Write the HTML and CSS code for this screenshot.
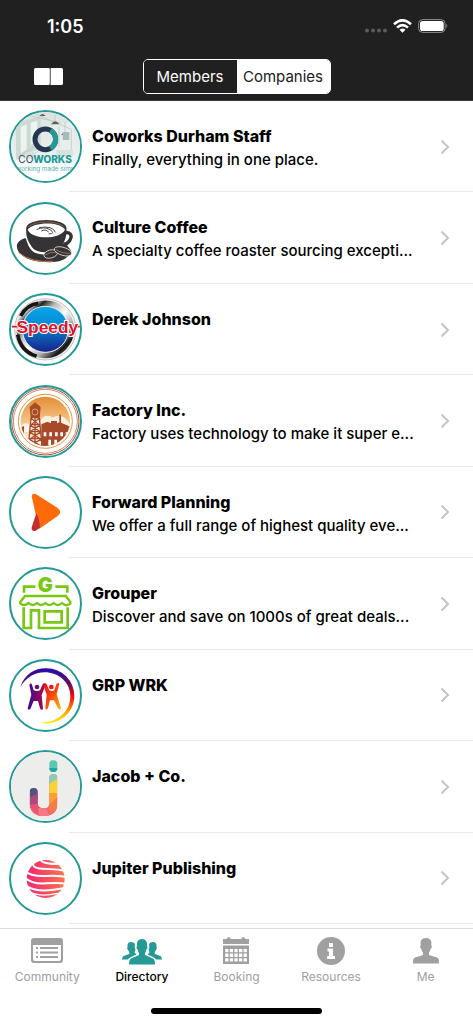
FILE: index.html
```html
<!DOCTYPE html>
<html lang="en">
<head>
  <meta charset="UTF-8" />
  <meta name="viewport" content="width=device-width, initial-scale=1.0"/>
  <title>Directory</title>
  <link rel="stylesheet" href="styles.css">
</head>
<body>
  <div class="app">
    <header class="header">
      <div class="status-bar">
        <span class="clock">1:05</span>
        <div class="status-icons">
          <svg width="22" height="14" viewBox="0 0 22 14" fill="#5c5c5c"><circle cx="2" cy="11.5" r="2"/><circle cx="8" cy="11.5" r="2"/><circle cx="14" cy="11.5" r="2"/><circle cx="20" cy="11.5" r="2"/></svg>
          <svg width="19" height="14" viewBox="0 0 19 14" fill="none" stroke="#fff" stroke-width="2.6"><path d="M1 5.200Q9.500-2.500 18 5.200M4 8.600Q9.500 3.700 15 8.600"/><path d="M6.500 10.800Q9.500 8.400 12.500 10.800L9.500 13.800z" fill="#fff" stroke="none"/></svg>
          <svg width="30" height="14" viewBox="0 0 30 14"><rect x=".6" y=".6" width="26.500" height="12.800" rx="4" fill="none" stroke="#8d8d8d"/><rect x="2" y="2" width="23.700" height="10" rx="2.600" fill="#fff"/><path d="M28.300 4.800q2 2.200 0 4.400z" fill="#8d8d8d"/></svg>
        </div>
      </div>
      <div class="nav-bar">
        <button class="book-button" aria-label="Guide"><svg width="29" height="17" viewBox="0 0 29 17"><path d="M1.500 0H14.500q1.300 0 1.300 1.300v14.400q0 1.300-1.300 1.300H1.500Q0 17 0 15.500v-14Q0 0 1.500 0zM16.600 0h10.900Q29 0 29 1.500v14q0 1.500-1.500 1.500H16.600z" fill="#fff"/></svg></button>
        <div class="segmented">
          <button class="segment">Members</button>
          <button class="segment selected">Companies</button>
        </div>
      </div>
    </header>

    <main class="main">
      <ul class="company-list">
        <li class="company">
          <a class="company-link" href="#">
            <svg class="avatar" viewBox="6 6 207 207">
              <defs><linearGradient id="office" x2="0" y2="1"><stop stop-color="#dbe3df"/><stop offset=".6" stop-color="#e9efed"/><stop offset=".85" stop-color="#fff"/></linearGradient></defs>
              <rect width="219" height="219" fill="url(#office)"/>
              <path d="M20 40L95 18v95L22 150z" fill="#cdd9d3"/>
              <path d="M35 50l18-7v75l-18 12zM65 38l20-6v62l-20 12z" fill="#edf3ee"/>
              <path d="M132 38h62v92h-62z" fill="#e8eeed"/>
              <path d="M60 16l98 24M80 12l105 45M138 15v18M168 35v34M150 48v62M187 58v65M28 140l45-28M46 154l40-30" stroke="#b6c3bf" stroke-width="2" fill="none"/>
              <path d="M126 43q13-18 25 0zM156 75q12-15 22 0zM92 18q8-12 18 0z" fill="#56645f"/>
              <path d="M161 66h20v24h-20z" fill="#a9bab9"/>
              <path d="M50 126h25v20H50zM142 120h50v18h-50z" fill="#d7e1dd"/>
              <circle cx="109" cy="88" r="31" fill="none" stroke="#253750" stroke-width="15"/>
              <path d="M124 61A31 31 0 0 1 124 115" fill="none" stroke="#249a97" stroke-width="15"/>
              <text x="28" y="158" class="logo-coworks" fill="#34475b">CO<tspan class="heavy" fill="#249a97">WORKS</tspan></text>
              <text x="109" y="183" class="logo-tagline" text-anchor="middle" fill="#58b0ac">working made simp</text>
            </svg>
            <span class="details"><strong class="name">Coworks Durham Staff</strong><span class="about">Finally, everything in one place.</span></span>
            <svg class="chevron" viewBox="0 0 10 16"><path d="M1.500 1.500L8 8l-6.500 6.500"/></svg>
          </a>
        </li>
        <li class="company">
          <a class="company-link" href="#">
            <svg class="avatar" viewBox="6 6 207 207">
              <path d="M52 108C19 115 15 139 38 159C66 184 143 187 168 170Q188 158 184 143L167 121z" fill="#363334"/>
              <path d="M28 151Q65 183 132 178" fill="none" stroke="#cc7950" stroke-width="3"/>
              <path d="M53 105C63 143 74 154 108 154Q150 154 164 122" fill="none" stroke="#fff" stroke-width="7"/>
              <path d="M166 93C198 86 192 125 151 133" fill="none" stroke="#363334" stroke-width="10"/>
              <path d="M52 77C48 110 65 149 112 149S176 111 172 77z" fill="#363334"/>
              <ellipse cx="112" cy="78" rx="60" ry="24" fill="#363334"/>
              <path d="M56 83C72 60 151 57 168 83C155 112 70 115 56 83z" fill="#fff"/>
              <path d="M58 74C83 55 140 55 166 74" fill="none" stroke="#bd7656" stroke-width="2"/>
              <path d="M83 83Q105 72 123 83T119 96M97 87Q112 80 119 91M90 77Q132 70 139 91" fill="none" stroke="#4b4645" stroke-width="3"/>
              <g stroke="#fff" stroke-width="2" fill="#363334"><ellipse cx="125" cy="156" rx="21" ry="12" transform="rotate(-15 125 156)"/><ellipse cx="162" cy="148" rx="27" ry="12" transform="rotate(17 162 148)"/></g>
              <path d="M107 160q19-12 35-9M140 142q17 13 44 12" fill="none" stroke="#d58963" stroke-width="2"/>
            </svg>
            <span class="details"><strong class="name">Culture Coffee</strong><span class="about">A specialty coffee roaster sourcing excepti...</span></span>
            <svg class="chevron" viewBox="0 0 10 16"><path d="M1.500 1.500L8 8l-6.500 6.500"/></svg>
          </a>
        </li>
        <li class="company">
          <a class="company-link" href="#">
            <svg class="avatar" viewBox="6 6 207 207">
              <defs>
                <linearGradient id="chrome" x2="1" y2="1"><stop stop-color="#999"/><stop offset=".13" stop-color="#eee"/><stop offset=".22" stop-color="#222"/><stop offset=".35" stop-color="#bbb"/><stop offset=".52" stop-color="#fff"/><stop offset=".7" stop-color="#aaa"/><stop offset=".85" stop-color="#151515"/><stop offset="1" stop-color="#888"/></linearGradient>
                <linearGradient id="blue" x2="0" y2="1"><stop stop-color="#08a7e5"/><stop offset=".4" stop-color="#078bd5"/><stop offset="1" stop-color="#17208b"/></linearGradient>
              </defs>
              <circle cx="109" cy="109" r="92" fill="#eee" stroke="#aaa" stroke-width="2"/>
              <circle cx="109" cy="109" r="78" fill="none" stroke="url(#chrome)" stroke-width="17"/>
              <path d="M35 69Q54 34 88 31M26 125Q35 175 83 190" stroke="#161616" stroke-width="11" fill="none"/>
              <circle cx="109" cy="109" r="69" fill="url(#blue)" stroke="#e7e7e7" stroke-width="3"/>
              <path d="M9 101h19l12 13M204 101h10" fill="none" stroke="#fff" stroke-width="11"/>
              <path d="M9 101h19l12 13M202 101h12" fill="none" stroke="#db142b" stroke-width="5"/>
              <text x="115" y="121" text-anchor="middle" class="logo-speedy">Speedy</text>
            </svg>
            <span class="details"><strong class="name">Derek Johnson</strong></span>
            <svg class="chevron" viewBox="0 0 10 16"><path d="M1.500 1.500L8 8l-6.500 6.500"/></svg>
          </a>
        </li>
        <li class="company">
          <a class="company-link" href="#">
            <svg class="avatar" viewBox="6 6 207 207">
              <defs><linearGradient id="sunset" x2="0" y2="1"><stop stop-color="#e58c31"/><stop offset=".55" stop-color="#f5c990"/><stop offset="1" stop-color="#fff"/></linearGradient><clipPath id="disc"><circle cx="109" cy="109" r="74"/></clipPath></defs>
              <circle cx="109" cy="109" r="101" fill="none" stroke="#a6502f" stroke-width="3"/>
              <circle cx="109" cy="109" r="96" fill="none" stroke="#a6502f" stroke-width="2"/>
              <circle cx="109" cy="109" r="81" fill="#fff" stroke="#e3943b" stroke-width="3"/>
              <g clip-path="url(#disc)">
                <path d="M34 34h150v150H34z" fill="url(#sunset)"/>
                <path d="M27 139q13-31 32-22 12-30 35-8 10-25 37-12 35-17 55 29v26z" fill="#fff" opacity=".75"/>
                <path d="M27 131l18-8v61H27zM97 118l18-8 11 5v-7h18v7l7-3V89h5v24l30 13v58H97z" fill="#a8492a"/>
                <path d="M104 142h8v12h-8zM121 142h8v12h-8zM138 142h8v12h-8zM154 142h8v12h-8zM170 142h8v12h-8zM118 164h8v20h-8zM136 164h8v20h-8z" fill="#fff"/>
                <path d="M62 66l16-14 17 14-3 33H65z" fill="#a8492a"/>
                <circle cx="78" cy="81" r="9" fill="none" stroke="#f5c990" stroke-width="2"/>
                <path d="M66 98L58 184M91 98l8 86M66 100l26 21-30 20 34 22-36 20M91 100l-27 21 31 20-34 22 36 20M64 119h30M62 140h33M60 161h37M78 97v87" stroke="#a8492a" stroke-width="4" fill="none"/>
              </g>
            </svg>
            <span class="details"><strong class="name">Factory Inc.</strong><span class="about">Factory uses technology to make it super e...</span></span>
            <svg class="chevron" viewBox="0 0 10 16"><path d="M1.500 1.500L8 8l-6.500 6.500"/></svg>
          </a>
        </li>
        <li class="company">
          <a class="company-link" href="#">
            <svg class="avatar" viewBox="6 6 207 207">
              <path d="M68 61Q69 50 80 54L145 95Q161 108 147 119L91 158Q88 135 80 114Z" fill="#ff6b08"/>
              <path d="M82 112Q91 125 93 155L80 164Q67 169 68 154z" fill="#c43030"/>
            </svg>
            <span class="details"><strong class="name">Forward Planning</strong><span class="about">We offer a full range of highest quality eve...</span></span>
            <svg class="chevron" viewBox="0 0 10 16"><path d="M1.500 1.500L8 8l-6.500 6.500"/></svg>
          </a>
        </li>
        <li class="company">
          <a class="company-link" href="#">
            <svg class="avatar" viewBox="6 6 207 207">
              <g fill="none" stroke="#78c713" stroke-width="8">
                <path d="M45 77V59h34M139 59h36v18"/>
                <path d="M48 87h122l14 18v5q-13 10-25-2-13 12-25 0-13 12-25 0-13 12-25 0-13 12-25 0-13 11-25 2v-5z" stroke-width="7"/>
                <path d="M44 121v62h22v-53h24v53h86v-62M107 133h51v33h-51z"/>
              </g>
              <circle cx="109" cy="53" r="25" fill="#fff"/>
              <text x="109" y="75" text-anchor="middle" class="logo-g">G</text>
            </svg>
            <span class="details"><strong class="name">Grouper</strong><span class="about">Discover and save on 1000s of great deals...</span></span>
            <svg class="chevron" viewBox="0 0 10 16"><path d="M1.500 1.500L8 8l-6.500 6.500"/></svg>
          </a>
        </li>
        <li class="company">
          <a class="company-link" href="#">
            <svg class="avatar" viewBox="6 6 207 207">
              <defs>
                <linearGradient id="swoosh" x2="0" y2="1"><stop stop-color="#2609b1"/><stop offset=".28" stop-color="#60115d"/><stop offset=".52" stop-color="#ff0909"/><stop offset=".8" stop-color="#ffab00"/><stop offset="1" stop-color="#fff10c"/></linearGradient>
                <linearGradient id="leftman" x2="1"><stop stop-color="#3a0a97"/><stop offset="1" stop-color="#b6083e"/></linearGradient>
                <linearGradient id="rightman" x2="1" y2="1"><stop stop-color="#ef081c"/><stop offset=".5" stop-color="#fa4c0b"/><stop offset="1" stop-color="#ffbd04"/></linearGradient>
              </defs>
              <path d="M34 85C46 45 77 28 111 28A83 83 0 0 1 196 112C195 164 147 203 92 191C146 192 184 158 184 112C184 37 76 9 34 85z" fill="url(#swoosh)"/>
              <circle cx="84" cy="84" r="7" fill="#6d1268"/><circle cx="127" cy="84" r="7" fill="#ef1518"/>
              <path d="M61 77q5-7 8 0l5 17q10 4 19 0l8-18q6-7 9 1l-12 31 4 42q-5 6-9-2l-6-22-13 0-10 24q-7 5-8-2l11-41z" fill="url(#leftman)"/>
              <path d="M103 77q6-8 10-1l8 18q8 4 15 0l6-18q7-8 9-1l-8 31 13 41q-4 8-9 1l-12-24h-12l-6 24q-7 7-8 0l4-41z" fill="url(#rightman)"/>
            </svg>
            <span class="details"><strong class="name">GRP WRK</strong></span>
            <svg class="chevron" viewBox="0 0 10 16"><path d="M1.500 1.500L8 8l-6.500 6.500"/></svg>
          </a>
        </li>
        <li class="company">
          <a class="company-link" href="#">
            <svg class="avatar" viewBox="6 6 207 207">
              <defs><clipPath id="jay"><path d="M121 83q0-11 12-11t12 11v78q0 37-41 37t-42-37v-35q0-12 12-12t12 12v34q0 15 18 15t17-15z"/></clipPath></defs>
              <rect width="219" height="219" fill="#ededec"/>
              <rect x="121" y="31" width="24" height="35" rx="11" fill="#5bc7b5"/>
              <path d="M121 54h24q0 12-12 12t-12-12z" fill="#20a7a0"/>
              <g clip-path="url(#jay)">
                <path d="M60 70h90v130H60z" fill="#ef6379"/>
                <path d="M119 70h30v25l-30 23z" fill="#8cccb8"/><path d="M119 103l30-19v45h-30z" fill="#fbd32f"/>
                <path d="M119 129h30v27l-30 19z" fill="#ff9e38"/><path d="M119 166l30-28v36l-27 18z" fill="#f47c45"/>
                <path d="M60 110h29v37l-27 9z" fill="#545181"/><path d="M60 143l30-13v35l-29 10z" fill="#ad497e"/>
                <path d="M60 166l30-6 17 18-17 20z" fill="#ed5275"/><path d="M88 175l22-7 11 31H88z" fill="#f77784"/>
              </g>
            </svg>
            <span class="details"><strong class="name">Jacob + Co.</strong></span>
            <svg class="chevron" viewBox="0 0 10 16"><path d="M1.500 1.500L8 8l-6.500 6.500"/></svg>
          </a>
        </li>
        <li class="company">
          <a class="company-link" href="#">
            <svg class="avatar" viewBox="6 6 207 207">
              <defs><linearGradient id="planet" x2="1"><stop stop-color="#f12672"/><stop offset="1" stop-color="#fb744f"/></linearGradient></defs>
              <circle cx="110" cy="111" r="57" fill="url(#planet)"/>
              <g fill="none" stroke="#fff" stroke-width="6">
                <path d="M94 50Q93 67 153 66M75 60Q62 80 113 81T169 90M48 87Q64 104 112 102T171 107M48 107Q69 127 112 124T171 126M49 130Q78 149 117 145T166 138"/>
                <path d="M56 148Q88 163 123 158T158 151" stroke-width="4"/>
              </g>
            </svg>
            <span class="details"><strong class="name">Jupiter Publishing</strong></span>
            <svg class="chevron" viewBox="0 0 10 16"><path d="M1.500 1.500L8 8l-6.500 6.500"/></svg>
          </a>
        </li>
      </ul>
    </main>

    <footer class="footer">
      <nav class="tabs">
        <a class="tab" href="#">
          <svg width="32" height="28" viewBox="0 0 32 28"><path d="M3 1h26q3 0 3 3v19q0 3-3 3H3q-3 0-3-3V4q0-3 3-3zm-1 7v14q0 2 2 2h24q2 0 2-2V8z" fill="currentColor" fill-rule="evenodd"/><path d="M5 11h2M9 11h18M5 15.500h2M9 15.500h18M5 20h2M9 20h18" stroke="currentColor" stroke-width="2.200"/></svg>
          Community
        </a>
        <a class="tab active" href="#">
          <svg width="40" height="28" viewBox="0 0 40 28"><g fill="#249a97"><path d="M20 2c4 0 5.500 3 5 7 1 1 .4 3-.7 3.500Q24 15 23 16v2l8 3.500q2 1 2 6H7q0-5 2-6L17 18v-2q-1-1-1.300-3.500C14.500 12 14 10 15 9c-.5-4 1-7 5-7z"/><path d="M13 7q-1-2-4-2-4 0-3.500 5-1 2 .5 3l1.200 2v2L1.500 19Q0 20 0 22.500h6q1-2 8.500-5l-2-2 1-3Q12 10 13 7zM27 7q1-2 4-2 4 0 3.500 5 1 2-.5 3l-1.200 2v2l5.700 2q1.500 1 1.500 3.500h-6q-1-2-8.500-5l2-2-1-3Q28 10 27 7z"/></g></svg>
          Directory
        </a>
        <a class="tab" href="#">
          <svg width="28" height="28" viewBox="0 0 28 28" fill="currentColor"><path d="M1 2h4q0-2 1.700-2T8.500 2h11q0-2 1.800-2T23 2h4v5H1z"/><path fill-rule="evenodd" d="M1 8.500h26V27H1zM3.200 12v3.300h3.300V12zm4.600 0v3.300h3.300V12zm4.600 0v3.300h3.300V12zm4.600 0v3.300h3.300V12zm4.600 0v3.300h3.300V12zM3.200 16.600v3.300h3.300v-3.300zm4.600 0v3.300h3.300v-3.300zm4.600 0v3.300h3.300v-3.300zm4.600 0v3.300h3.300v-3.300zm4.600 0v3.300h3.300v-3.300zM3.200 21.200v3.300h3.300v-3.300zm4.600 0v3.300h3.300v-3.300zm4.600 0v3.300h3.300v-3.300zm4.600 0v3.300h3.300v-3.300zm4.600 0v3.300h3.300v-3.300z"/></svg>
          Booking
        </a>
        <a class="tab" href="#">
          <svg width="28" height="28" viewBox="0 0 28 28"><circle cx="14" cy="14" r="14" fill="currentColor"/><path d="M12 6h4v4h-4zM10.500 11.500H16V19h2v3h-8v-3h2v-4.500h-1.500z" fill="#fff"/></svg>
          Resources
        </a>
        <a class="tab" href="#">
          <svg width="28" height="28" viewBox="0 0 28 28"><path d="M14 1c4.500 0 6 3 5.300 7.200 1 1.200.5 3.500-.8 3.800q-.2 2-1.500 3.500V18l8 2.500q2.500 1 2 6H1q-.5-5 2-6L11 18v-2.500Q9.700 14 9.500 12C8.200 11.700 7.700 9.400 8.700 8.200 8 4 9.500 1 14 1z" fill="currentColor"/></svg>
          Me
        </a>
      </nav>
      <div class="home-indicator"></div>
    </footer>
  </div>
</body>
</html>
```
FILE: styles.css
```css
* {
  box-sizing: border-box;
}
body {
  margin: 0;
  background-color: #fff;
  color: #000;
  font-family: Inter, "Liberation Sans", sans-serif;
}
button {
  font: inherit;
  cursor: pointer;
}
a {
  color: inherit;
  text-decoration: none;
}
.app {
  display: flex;
  flex-direction: column;
  min-height: 100vh;
}
.header {
  background-color: #202020;
  border-bottom: 1px solid #3a3a3a;
  color: #fff;
}
.status-bar {
  display: flex;
  justify-content: space-between;
  align-items: center;
  height: 52px;
  padding: 0 25px 0 47px;
}
.clock {
  font-size: 18px;
  font-weight: 600;
}
.status-icons {
  display: flex;
  align-items: center;
  gap: 6px;
}
.nav-bar {
  display: grid;
  grid-template-columns: 1fr auto 1fr;
  align-items: center;
  height: 48px;
  padding: 0 34px;
}
.book-button {
  display: flex;
  justify-self: start;
  padding: 0;
  border: none;
  background: none;
}
.segmented {
  display: flex;
  height: 35px;
  border: 1px solid #fff;
  border-radius: 5px;
  overflow: hidden;
}
.segment {
  width: 93px;
  padding: 0;
  border: none;
  background-color: #202020;
  color: #fff;
  font-size: 15px;
}
.segment.selected {
  background-color: #fff;
  color: #202020;
}
.main {
  display: flex;
  flex: 1;
  padding-bottom: 4px;
}
.company-list {
  display: grid;
  grid-auto-rows: 1fr;
  flex: 1;
  min-width: 0;
  margin: 0;
  padding: 0;
  list-style: none;
}
.company {
  min-width: 0;
  background: linear-gradient(#e9e9e9, #e9e9e9) 69px 100% / 100% 1px no-repeat;
}
.company-link {
  display: flex;
  align-items: center;
  height: 100%;
  min-height: 91px;
  padding: 0 23px 0 9px;
}
.avatar {
  flex: none;
  width: 73px;
  height: 73px;
  border: 2px solid #249a97;
  border-radius: 50%;
}
.details {
  display: flex;
  flex: 1;
  flex-direction: column;
  align-self: flex-start;
  min-width: 0;
  padding: 23px 0 0 10px;
  line-height: 24px;
  white-space: nowrap;
}
.name {
  font-size: 16px;
  font-weight: 800;
}
.about {
  font-size: 15px;
  font-weight: 500;
}
.chevron {
  flex: none;
  width: 10px;
  height: 16px;
  fill: none;
  stroke: #c4c4c7;
  stroke-width: 2;
}
.logo-coworks {
  font-size: 30px;
}
.logo-coworks .heavy {
  font-weight: 800;
}
.logo-tagline {
  font-size: 19px;
}
.logo-speedy {
  fill: #db142b;
  stroke: #fff;
  stroke-width: 6px;
  paint-order: stroke;
  font-family: "Liberation Sans", sans-serif;
  font-size: 52px;
  font-weight: 700;
}
.logo-g {
  fill: #78c713;
  font-size: 60px;
  font-weight: 900;
}
.footer {
  border-top: 1px solid #dcdcdc;
}
.tabs {
  display: flex;
  height: 79px;
  padding-top: 8px;
}
.tab {
  display: flex;
  flex: 1;
  flex-direction: column;
  align-items: center;
  gap: 4px;
  color: #a0a0a0;
  font-size: 12px;
  line-height: 16px;
}
.tab.active {
  color: #000;
  font-weight: 500;
}
.home-indicator {
  width: 36%;
  height: 6px;
  margin: 0 auto 10px;
  border-radius: 3px;
  background-color: #000;
}
```
